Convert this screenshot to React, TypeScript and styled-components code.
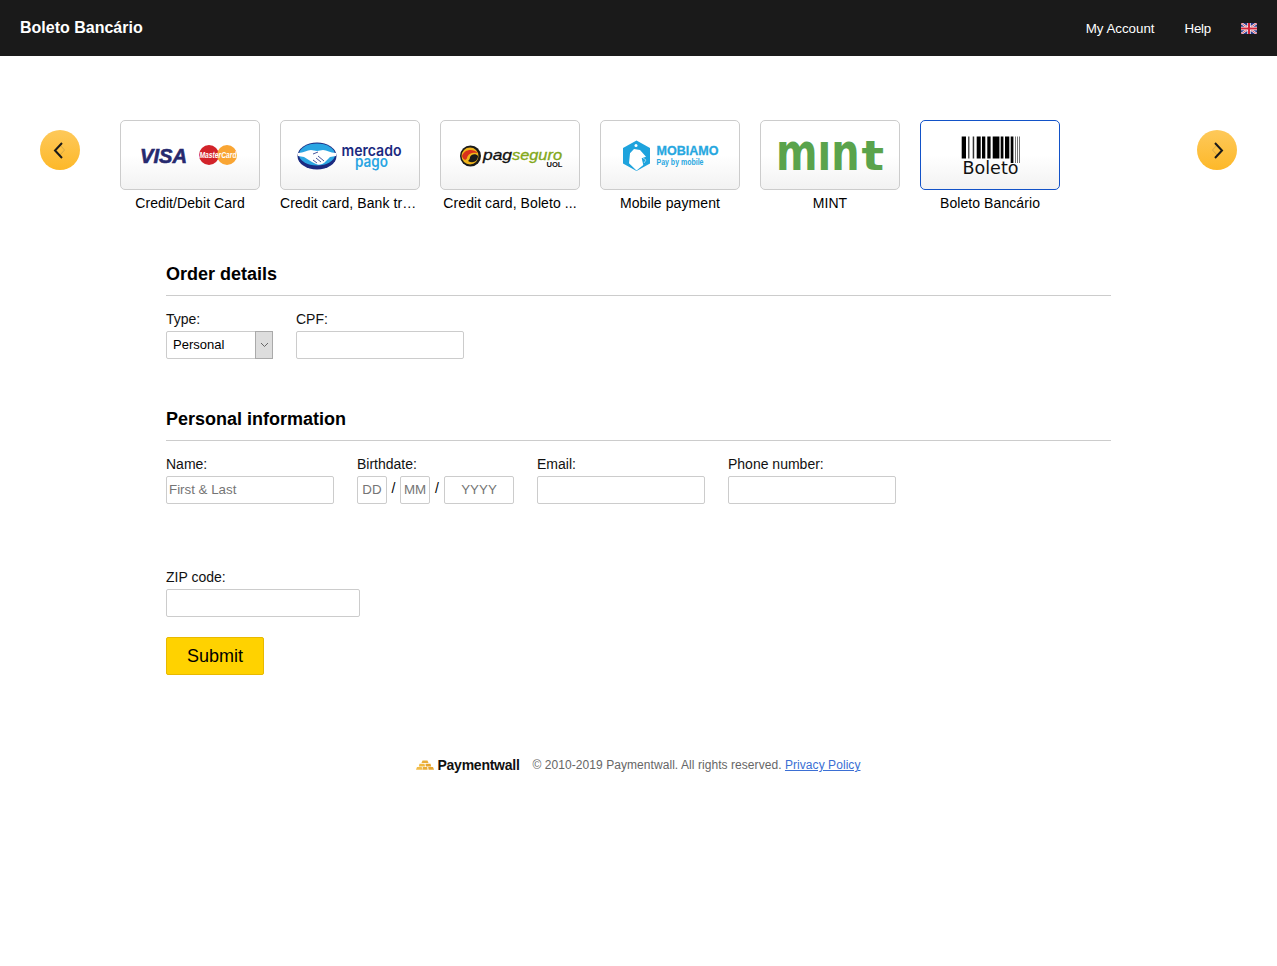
import React from "react"
import styled, { createGlobalStyle } from "styled-components"

const FONT = `"Liberation Sans", Arial, sans-serif`
const DEJAVU = `"DejaVu Sans", sans-serif`

const GlobalStyle = createGlobalStyle`
  html, body {
    margin: 0;
    padding: 0;
    background: #fff;
    font-family: ${FONT};
    font-size: 14px;
    color: #000;
  }
  * { box-sizing: border-box; }
`

const VisaLogo = () => (
  <LogoSvg viewBox="0 0 140 70">
    <text x="20" y="43" fontFamily={FONT} fontWeight="bold" fontStyle="italic" fontSize="21" fill="#26296e" stroke="#26296e" strokeWidth="0.6" textLength="47" lengthAdjust="spacingAndGlyphs">VISA</text>
    <circle cx="89" cy="35" r="10" fill="#d2232a" />
    <circle cx="107" cy="35" r="10" fill="#f9a533" />
    <text x="79.500" y="38" fontFamily={FONT} fontWeight="bold" fontStyle="italic" fontSize="8.500" fill="#fff" textLength="37" lengthAdjust="spacingAndGlyphs">MasterCard</text>
  </LogoSvg>
)

const MercadoLogo = () => (
  <LogoSvg viewBox="0 0 140 70">
    <ellipse cx="37" cy="36" rx="19.500" ry="13.500" fill="#1b2a80" />
    <ellipse cx="37" cy="34.500" rx="18" ry="11" fill="#2aa5e2" />
    <path d="M18 33 C24 33 27 30 31 30 L37 31 L43 30 C47 30 50 33 56 33 L56 36 L50 37 L44 43 C41 45 38 45 36 44 L32 42 L24 37 L18 36 Z" fill="#fff" />
    <path d="M33 34 L38 32 M36 38 L41 42 M33 40 L37 43 M38 36 L44 41" stroke="#1b2a80" strokeWidth="0.8" fill="none" />
    <text x="61.500" y="35.500" fontFamily="Inter, sans-serif" fontWeight="600" fontSize="15" fill="#1b2a80" textLength="60" lengthAdjust="spacingAndGlyphs">mercado</text>
    <text x="75" y="46.500" fontFamily="Inter, sans-serif" fontWeight="600" fontSize="15" fill="#2aa5e2" textLength="33" lengthAdjust="spacingAndGlyphs">pago</text>
  </LogoSvg>
)

const PagseguroLogo = () => (
  <LogoSvg viewBox="0 0 140 70">
    <circle cx="30.500" cy="36" r="10.500" fill="#1a1a1a" />
    <circle cx="30" cy="36" r="8.500" fill="#f0b41c" />
    <path d="M22 36 C24 29 33 28 38 33 C33 32 28 33 27 38 C26 41 23 40 22 36 Z" fill="#d9301c" />
    <path d="M28 41 C33 44 38 41 38 36 C36 33 31 34 30 37 C30 39 29 40 28 41 Z" fill="#1a1a1a" />
    <text x="43" y="40" fontFamily={FONT} fontStyle="italic" fontSize="15.500" fill="#111" stroke="#111" strokeWidth="0.35" textLength="29" lengthAdjust="spacingAndGlyphs">pag</text>
    <text x="72" y="40" fontFamily={FONT} fontStyle="italic" fontSize="15.500" fill="#83a81a" stroke="#83a81a" strokeWidth="0.35" textLength="50" lengthAdjust="spacingAndGlyphs">seguro</text>
    <text x="106.500" y="47" fontFamily={FONT} fontWeight="bold" fontSize="6.500" fill="#111" textLength="16" lengthAdjust="spacingAndGlyphs">UOL</text>
  </LogoSvg>
)

const MobiamoLogo = () => (
  <LogoSvg viewBox="0 0 140 70">
    <path d="M36.500 20.500 L50 28 L50 43.500 L36.500 51 L23 43.500 L23 28 Z" fill="#1ea3dd" />
    <path d="M34 29 L30 33.300 L29 43.300 L36.500 50.500 L43.300 45 L41.700 38.300 L46 36.700 L40 30 Z" fill="#fff" />
    <circle cx="36" cy="25.500" r="1.500" fill="#fff" />
    <path d="M43 38 L46 40 L44 43" stroke="#9bd6ef" strokeWidth="1" fill="none" />
    <text x="56.500" y="35" fontFamily={FONT} fontWeight="bold" fontSize="13" fill="#27a7df" stroke="#27a7df" strokeWidth="0.3" textLength="62" lengthAdjust="spacingAndGlyphs">MOBIAMO</text>
    <text x="56.500" y="44.500" fontFamily={FONT} fontWeight="bold" fontSize="8.500" fill="#27a7df" textLength="47" lengthAdjust="spacingAndGlyphs">Pay by mobile</text>
  </LogoSvg>
)

const MintLogo = () => (
  <LogoSvg viewBox="0 0 140 70">
    <text transform="translate(16 50) scale(0.766 1)" fontFamily={DEJAVU} fontWeight="bold" fontSize="52" fill="#5aa34c">{"m\u0131n"}</text>
    <text transform="translate(101.500 50) scale(1.180 1)" fontFamily={DEJAVU} fontWeight="bold" fontSize="40" fill="#5aa34c">t</text>
  </LogoSvg>
)

// x, width of the barcode bars
const BARS: [number, number, string][] = [
  [41.700, 4.300, "#000"], [48, 1.500, "#555"], [52.700, 1.500, "#333"], [56.700, 4, "#000"], [62, 3.300, "#000"],
  [67.300, 3.300, "#000"], [72.700, 6.700, "#000"], [80.700, 2.700, "#000"], [85, 4.300, "#000"], [90.700, 2.700, "#000"],
  [95, 1, "#777"], [97, 1, "#777"], [99, 1, "#777"],
]

const BoletoLogo = () => (
  <LogoSvg viewBox="0 0 140 70">
    {BARS.map(([x, w, fill]) => (
      <rect key={x} x={x} y="16.500" width={w} height={x > 90 ? 26.500 : 22} fill={fill} />
    ))}
    <text x="42.500" y="54" fontFamily={DEJAVU} fontSize="18" fill="#111" textLength="56" lengthAdjust="spacingAndGlyphs">Boleto</text>
  </LogoSvg>
)

const METHODS = [
  { name: "Credit/Debit Card", logo: <VisaLogo /> },
  { name: "Credit card, Bank transfer", logo: <MercadoLogo /> },
  { name: "Credit card, Boleto ...", logo: <PagseguroLogo /> },
  { name: "Mobile payment", logo: <MobiamoLogo /> },
  { name: "MINT", logo: <MintLogo /> },
  { name: "Boleto Bancário", logo: <BoletoLogo />, active: true },
]

const Chevron = ({ dir }: { dir: "left" | "right" }) => (
  <svg width="40" height="40" viewBox="0 0 40 40">
    <g transform={dir === "left" ? "translate(40 0) scale(-1 1)" : undefined}>
      <path d="M15.500 20 L20 15 L24.500 20 L20 25 Z" fill="none" stroke="#8a7a4a" strokeWidth="0.5" opacity="0.7" />
      <path d="M18 13 L25 20.500 L18 28" fill="none" stroke="#1a1a1a" strokeWidth="2" />
    </g>
  </svg>
)

const Flag = () => (
  <svg width="16" height="11" viewBox="0 0 60 40" preserveAspectRatio="none">
    <rect width="60" height="40" fill="#2b3a8c" />
    <path d="M0 0 L60 40 M60 0 L0 40" stroke="#fff" strokeWidth="8" />
    <path d="M0 0 L60 40 M60 0 L0 40" stroke="#d0243a" strokeWidth="3" />
    <path d="M30 0 V40 M0 20 H60" stroke="#fff" strokeWidth="13" />
    <path d="M30 0 V40 M0 20 H60" stroke="#d0243a" strokeWidth="8" />
  </svg>
)

const PwIcon = () => (
  <svg width="18" height="10" viewBox="0 0 18 10">
    <path d="M6.500 0.500 H11.500 L12.500 3 H5.500 Z" fill="#e9ad38" />
    <path d="M3.500 3.800 H8.500 L9 6.500 H2.800 Z" fill="#f0b840" />
    <path d="M9.500 3.800 H14.500 L15.200 6.500 H9.800 Z" fill="#e6a52e" />
    <path d="M1 7 H5.800 L6.200 9.800 H0 Z" fill="#f2bd4a" />
    <path d="M6.800 7 H11.200 L11.600 9.800 H6.400 Z" fill="#e9ad38" />
    <path d="M12.200 7 H17 L18 9.800 H12.600 Z" fill="#e6a52e" />
  </svg>
)

export default function App() {
  return (
    <>
      <GlobalStyle />
      <Header>
        <Brand>Boleto Bancário</Brand>
        <Nav>
          <NavLink>My Account</NavLink>
          <NavLink>Help</NavLink>
          <Flag />
        </Nav>
      </Header>

      <Carousel>
        <ArrowButton aria-label="Previous"><Chevron dir="left" /></ArrowButton>
        <Strip>
          {METHODS.map((method) => (
            <Method key={method.name}>
              <Tile $active={method.active}>{method.logo}</Tile>
              <MethodName>{method.name}</MethodName>
            </Method>
          ))}
        </Strip>
        <ArrowButton aria-label="Next"><Chevron dir="right" /></ArrowButton>
      </Carousel>

      <Content>
        <Section>
          <SectionTitle>Order details</SectionTitle>
          <FieldRow>
            <Field>
              <Label>Type:</Label>
              <SelectBox>
                <NativeSelect defaultValue="Personal">
                  <option>Personal</option>
                  <option>Business</option>
                </NativeSelect>
                <SelectArrow>
                  <svg width="9" height="6" viewBox="0 0 9 6">
                    <path d="M1 1 L4.500 4.500 L8 1" fill="none" stroke="#666" strokeWidth="1" />
                  </svg>
                </SelectArrow>
              </SelectBox>
            </Field>
            <Field>
              <Label>CPF:</Label>
              <Input />
            </Field>
          </FieldRow>
        </Section>

        <Section>
          <SectionTitle>Personal information</SectionTitle>
          <FieldRow>
            <Field>
              <Label>Name:</Label>
              <Input placeholder="First & Last" />
            </Field>
            <Field>
              <Label>Birthdate:</Label>
              <DateRow>
                <DateInput $w={30} placeholder="DD" />
                <Slash>/</Slash>
                <DateInput $w={30} placeholder="MM" />
                <Slash $wide>/</Slash>
                <DateInput $w={70} placeholder="YYYY" />
              </DateRow>
            </Field>
            <Field>
              <Label>Email:</Label>
              <Input />
            </Field>
            <Field>
              <Label>Phone number:</Label>
              <Input />
            </Field>
          </FieldRow>
          <ZipField>
            <Label>ZIP code:</Label>
            <ZipInput />
          </ZipField>
          <SubmitButton>Submit</SubmitButton>
        </Section>
      </Content>

      <Footer>
        <PwBrand><PwIcon /><PwName>Paymentwall</PwName></PwBrand>
        <Copy>© 2010-2019 Paymentwall. All rights reserved. <PolicyLink href="#">Privacy Policy</PolicyLink></Copy>
      </Footer>
    </>
  )
}

const Header = styled.header`
  height: 56px;
  background: #1a1a1a;
  color: #fff;
  display: flex;
  align-items: center;
  justify-content: space-between;
  padding: 0 20px;
`
const Brand = styled.div`
  font-size: 16px;
  font-weight: bold;
`
const Nav = styled.nav`
  display: flex;
  align-items: center;
  gap: 30px;
`
const NavLink = styled.a`
  font-size: 13.330px;
  color: #fff;
  &:last-of-type { letter-spacing: -0.25px; }
`
const Carousel = styled.div`
  display: flex;
  align-items: flex-start;
  padding: 64px 40px 0;
`
const ArrowButton = styled.button`
  flex: none;
  width: 40px;
  height: 40px;
  margin-top: 10px;
  padding: 0;
  border: 0;
  border-radius: 50%;
  background: linear-gradient(#fec95a, #fdb829);
  display: flex;
`
const Strip = styled.div`
  flex: 1;
  display: flex;
  gap: 20px;
  padding: 0 40px;
`
const Method = styled.div`
  width: 140px;
`
const Tile = styled.div<{ $active?: boolean }>`
  height: 70px;
  border: 1px solid ${(p) => (p.$active ? "#1252c8" : "#ccc")};
  border-radius: 5px;
  background: linear-gradient(#fff 50%, #f2f2f2);
  overflow: hidden;
`
const LogoSvg = styled.svg`
  display: block;
  width: 140px;
  height: 70px;
  margin: -1px;
`
const MethodName = styled.div`
  margin-top: 5px;
  line-height: 16px;
  font-size: 14px;
  letter-spacing: 0.08px;
  text-align: center;
  white-space: nowrap;
  overflow: hidden;
  text-overflow: ellipsis;
`
const Content = styled.main`
  width: 945px;
  margin: 0 0 0 166px;
  padding-top: 53px;
  display: flex;
  flex-direction: column;
  gap: 50px;
`
const Section = styled.section`
  display: flex;
  flex-direction: column;
  align-items: flex-start;
`
const SectionTitle = styled.h2`
  align-self: stretch;
  margin: 0 0 15px;
  padding-bottom: 11px;
  font-size: 18px;
  line-height: 20px;
  font-weight: bold;
  border-bottom: 1px solid #ccc;
`
const FieldRow = styled.div`
  display: flex;
  gap: 23px;
`
const Field = styled.div`
  display: flex;
  flex-direction: column;
`
const Label = styled.label`
  font-size: 14px;
  line-height: 16px;
  margin-bottom: 4px;
  color: #111;
`
const Input = styled.input`
  width: 168px;
  height: 28px;
  padding: 0 2px 1px;
  border: 1px solid #ccc;
  border-radius: 2px;
  font-family: ${FONT};
  font-size: 13.330px;
  outline: none;
  &::placeholder { color: #757575; opacity: 1; }
`
const SelectBox = styled.div`
  position: relative;
  width: 107px;
  height: 28px;
`
const NativeSelect = styled.select`
  appearance: none;
  width: 100%;
  height: 100%;
  padding: 0 0 1px 6px;
  border: 1px solid #ccc;
  border-radius: 2px;
  background: #fff;
  font-family: ${FONT};
  font-size: 13px;
  color: #000;
`
const SelectArrow = styled.span`
  position: absolute;
  top: 0;
  right: 0;
  width: 18px;
  height: 28px;
  display: flex;
  align-items: center;
  justify-content: center;
  background: #ddd;
  border: 1px solid #aaa;
  pointer-events: none;
`
const DateRow = styled.div`
  display: flex;
  align-items: flex-start;
`
const DateInput = styled(Input)<{ $w: number }>`
  width: ${(p) => p.$w}px;
  text-align: center;
`
const Slash = styled.span<{ $wide?: boolean }>`
  width: ${(p) => (p.$wide ? 14 : 13)}px;
  line-height: 24px;
  text-align: center;
`
const ZipField = styled(Field)`
  margin-top: 65px;
`
const ZipInput = styled(Input)`
  width: 194px;
`
const SubmitButton = styled.button`
  margin-top: 20px;
  width: 98px;
  height: 38px;
  padding: 0;
  border: 1px solid #e8b900;
  border-radius: 2px;
  background: #ffd200;
  font-family: ${FONT};
  font-size: 18px;
  color: #000;
`
const Footer = styled.footer`
  margin-top: 80px;
  display: flex;
  align-items: center;
  justify-content: center;
  gap: 13px;
  height: 20px;
`
const PwBrand = styled.div`
  display: flex;
  align-items: center;
  gap: 3px;
`
const PwName = styled.span`
  font-size: 14px;
  font-weight: bold;
  letter-spacing: -0.25px;
  color: #111;
`
const Copy = styled.div`
  font-size: 12px;
  letter-spacing: 0.06px;
  color: #666;
`
const PolicyLink = styled.a`
  color: #3b6fd4;
  text-decoration: underline;
`
